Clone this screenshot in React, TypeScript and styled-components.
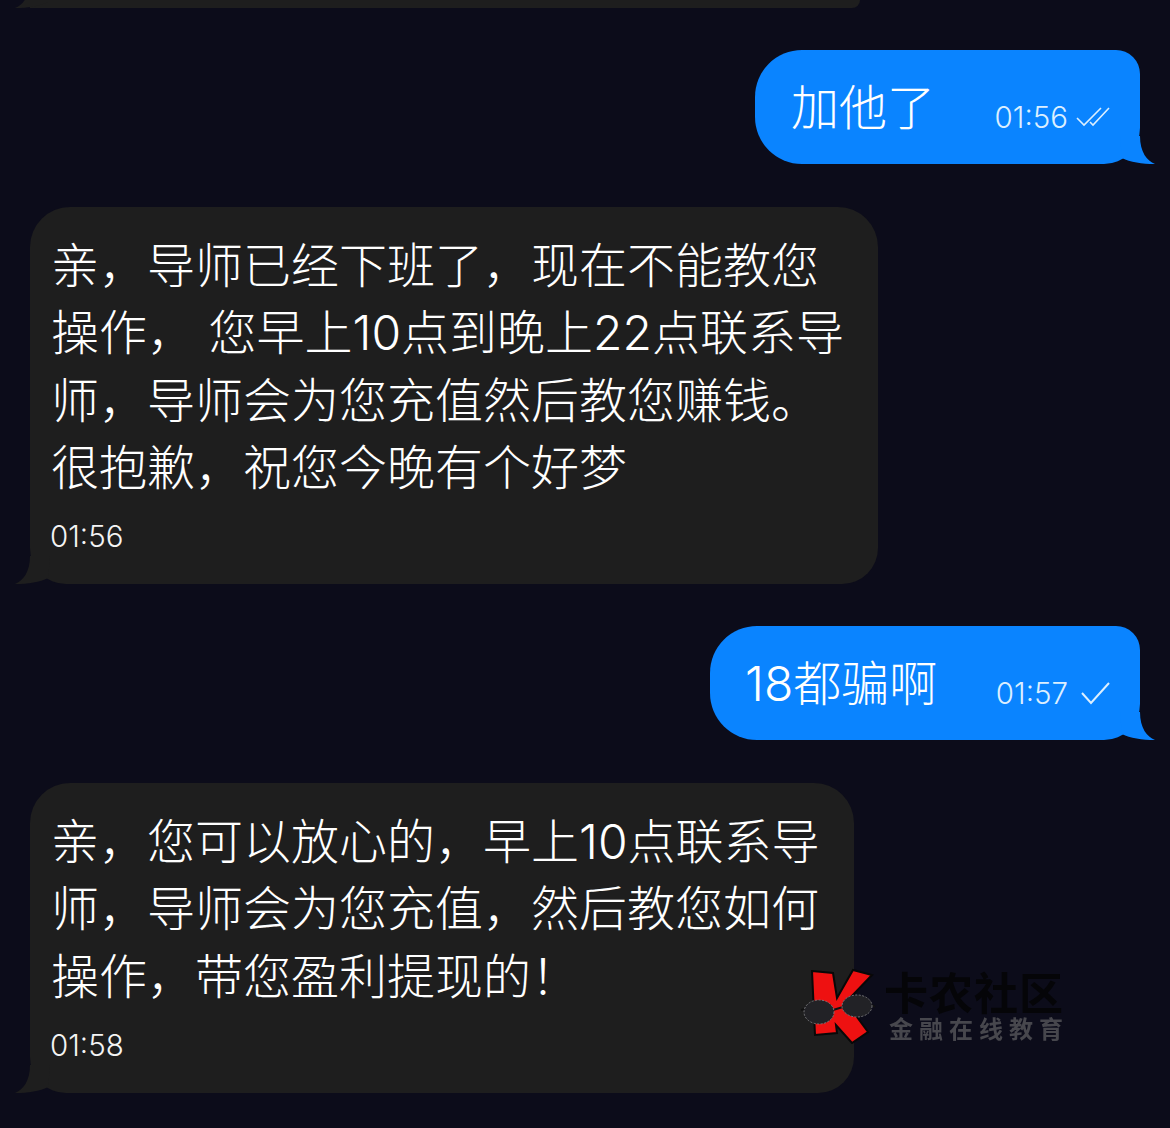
import React from "react";
import styled, { createGlobalStyle } from "styled-components";

const Global = createGlobalStyle`
  html, body { margin: 0; padding: 0; background: #0c0c1a; }
  body { font-family: "Inter", "Noto Sans CJK SC", sans-serif; }
`;

const Page = styled.main`
  position: relative;
  width: 1170px;
  height: 1128px;
  overflow: hidden;
  box-sizing: border-box;
  padding: 0 30px;
  display: flex;
  flex-direction: column;
  background: #0c0c1a;
`;

const Stub = styled.div`
  position: relative;
  width: 830px;
  height: 8px;
  margin-bottom: 42px;
  background: #1e1e1e;
  border-radius: 0 0 24px 0;
  align-self: flex-start;
`;

const Bubble = styled.div<{ $w: number; $gap?: number }>`
  position: relative;
  box-sizing: border-box;
  width: ${(p) => p.$w}px;
  margin-bottom: ${(p) => p.$gap ?? 0}px;
`;

const Incoming = styled(Bubble)`
  align-self: flex-start;
  background: #1e1e1e;
  border-radius: 40px 40px 36px 36px;
  padding: 25px 0 30px 20px;
  color: #fff;
`;

const Outgoing = styled(Bubble)`
  align-self: flex-end;
  height: 114px;
  background: #0a84ff;
  border-radius: 47px 24px 36px 47px;
  color: #fff;
  display: flex;
  align-items: flex-start;
  justify-content: space-between;
  padding: 24px 30px 0 0;
`;

const Body = styled.div`
  font-size: 48px;
  line-height: 67.25px;
  font-weight: 300;
  white-space: pre;
  margin-left: 1px;
`;

const OutBody = styled(Body)<{ $left: number }>`
  padding-left: ${(p) => p.$left}px;
`;

const Meta = styled.div<{ $gap: number }>`
  display: flex;
  align-items: center;
  gap: ${(p) => p.$gap}px;
  height: 36px;
  margin-top: 25px;
  font-family: "Inter", sans-serif;
  font-size: 29.5px;
  font-weight: 350;
  color: #dcefff;
`;

const Time = styled.div`
  height: 36px;
  margin-top: 17px;
  line-height: 36px;
  font-family: "Inter", sans-serif;
  font-size: 29.5px;
  font-weight: 350;
  color: #f4f4f4;
`;

const Tail = styled.svg<{ $side: "left" | "right"; $fill: string }>`
  position: absolute;
  bottom: 0;
  width: 45px;
  height: 36px;
  fill: ${(p) => p.$fill};
  ${(p) =>
    p.$side === "right"
      ? "right: -15px;"
      : "left: -15px; transform: scaleX(-1);"}
`;

const Watermark = styled.div`
  position: absolute;
  left: 800px;
  top: 968px;
  width: 270px;
  height: 80px;
  display: flex;
  gap: 6px;
  filter: blur(0.7px);
  pointer-events: none;
`;

const MarkText = styled.div`
  display: flex;
  flex-direction: column;
  padding-top: 1px;
`;

const MarkTitle = styled.div`
  font-family: "Noto Sans CJK SC", sans-serif;
  font-size: 44px;
  line-height: 44px;
  font-weight: 700;
  letter-spacing: 1px;
  color: #050508;
  white-space: nowrap;
`;

const MarkSub = styled.div`
  font-family: "Noto Sans CJK SC", sans-serif;
  font-size: 24px;
  line-height: 26px;
  margin: 2px 0 0 5px;
  letter-spacing: 6px;
  font-weight: 700;
  color: #47474d;
  white-space: nowrap;
`;

const TailShape = () => <path d="M12 30C20 34 32 36 45 36C37 33 30 24 30 8L10 8Z" />;

const Logo = () => (
  <svg width="78" height="76" viewBox="0 0 78 76">
    <path
      d="M12 3L33 5L37 30L53 2L72 7L46 34L68 64L52 75L36 57L37 65L15 67Z"
      fill="#ee1111"
      stroke="#080808"
      strokeWidth="2"
    />
    <path d="M1 42L5 41M33 42L43 39M72 37L75 39" stroke="#111" strokeWidth="2" />
    <g fill="#222226" stroke="#77777a" strokeWidth="1" strokeDasharray="2 1.5">
      <ellipse cx="19" cy="44" rx="15" ry="12" />
      <ellipse cx="57" cy="38" rx="15" ry="11" />
    </g>
  </svg>
);

const DoubleCheck = () => (
  <svg width="34" height="22" viewBox="0 0 34 22" fill="none" stroke="#dcefff" strokeWidth="1.6">
    <path d="M1 12L8 19L25 2" />
    <path d="M14 16L17 19L33 2" />
  </svg>
);

const SingleCheck = () => (
  <svg width="29" height="24" viewBox="0 0 29 24" fill="none" stroke="#dcefff" strokeWidth="2">
    <path d="M1 12L10 22L28 2" />
  </svg>
);

const App = () => (
  <>
    <Global />
    <Page>
      <Stub>
        <Tail $side="left" $fill="#1e1e1e" viewBox="0 0 45 36"><TailShape /></Tail>
      </Stub>
      <Outgoing $w={385} $gap={43}>
        <OutBody $left={35}>加他了</OutBody>
        <Meta $gap={8}>
          01:56
          <DoubleCheck />
        </Meta>
        <Tail $side="right" $fill="#0a84ff" viewBox="0 0 45 36"><TailShape /></Tail>
      </Outgoing>
      <Incoming $w={848} $gap={42}>
        <Body>{"亲，导师已经下班了，现在不能教您\n操作， 您早上10点到晚上22点联系导\n师，导师会为您充值然后教您赚钱。\n很抱歉，祝您今晚有个好梦"}</Body>
        <Time>01:56</Time>
        <Tail $side="left" $fill="#1e1e1e" viewBox="0 0 45 36"><TailShape /></Tail>
      </Incoming>
      <Outgoing $w={430} $gap={43}>
        <OutBody $left={34}>18都骗啊</OutBody>
        <Meta $gap={13}>
          01:57
          <SingleCheck />
        </Meta>
        <Tail $side="right" $fill="#0a84ff" viewBox="0 0 45 36"><TailShape /></Tail>
      </Outgoing>
      <Incoming $w={824}>
        <Body>{"亲，您可以放心的，早上10点联系导\n师，导师会为您充值，然后教您如何\n操作，带您盈利提现的！"}</Body>
        <Time>01:58</Time>
        <Tail $side="left" $fill="#1e1e1e" viewBox="0 0 45 36"><TailShape /></Tail>
      </Incoming>
      <Watermark>
        <Logo />
        <MarkText>
          <MarkTitle>卡农社区</MarkTitle>
          <MarkSub>金融在线教育</MarkSub>
        </MarkText>
      </Watermark>
    </Page>
  </>
);

export default App;
